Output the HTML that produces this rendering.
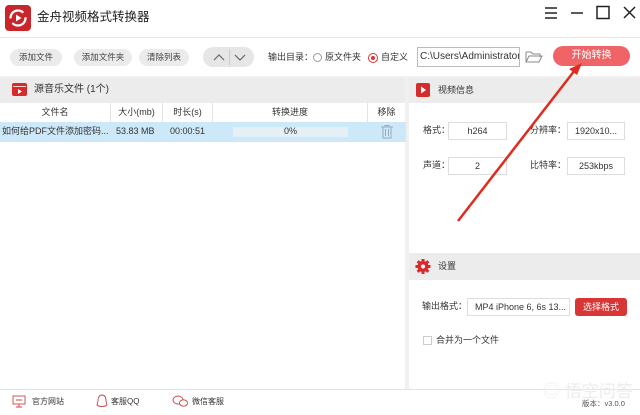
<!DOCTYPE html>
<html><head><meta charset="utf-8"><style>
*{margin:0;padding:0;box-sizing:border-box}
body{width:640px;height:415px;overflow:hidden;background:#fff;font-family:"Liberation Sans","Noto Sans CJK SC",sans-serif;font-size:9px;line-height:1.2;color:#333;position:relative}
.a{position:absolute}
.btn{position:absolute;height:17px;top:49px;background:#ebebeb;border-radius:9px;font-size:8.5px;line-height:17px;text-align:center;color:#444}
.hdr{background:#ececec}
.inp{position:absolute;background:#fff;border:1px solid #ddd;height:18px;line-height:16px;text-align:center;font-size:9px;color:#333}
.col{position:absolute;top:103px;height:19px;border-right:1px solid #e3e3e3;line-height:19px;text-align:center;font-size:9px}
</style></head><body>
<div class="a" style="left:5px;top:5px;width:26px;height:26px;background:#c9262b;border-radius:4px"></div>
<svg class="a" style="left:5px;top:5px" width="26" height="26" viewBox="0 0 26 26"><circle cx="13" cy="13" r="7.5" fill="none" stroke="#fff" stroke-width="2.2" stroke-dasharray="18 5"/><path d="M11 9.5 L16.5 13 L11 16.5Z" fill="#fff"/></svg>
<div class="a" style="left:37px;top:10px;font-size:12.5px;color:#222">金舟视频格式转换器</div>
<svg class="a" style="left:540px;top:5px" width="100" height="16" viewBox="0 0 100 16"><path d="M5 3h12M5 8h12M5 13h12" stroke="#222" stroke-width="1.5"/><path d="M31 8h12" stroke="#222" stroke-width="1.5"/><rect x="57" y="1.5" width="12" height="12" fill="none" stroke="#222" stroke-width="1.5"/><path d="M84 2l11 11M95 2l-11 11" stroke="#222" stroke-width="1.5"/></svg>
<div class="a" style="left:0;top:37px;width:640px;height:1px;background:#e6e6e6"></div>
<div class="btn" style="left:10px;width:52px">添加文件</div>
<div class="btn" style="left:74px;width:58px">添加文件夹</div>
<div class="btn" style="left:139px;width:50px">清除列表</div>
<div class="btn" style="left:203px;width:51px;height:20px;top:47px;border-radius:10px;background:#e6e6e6"></div>
<div class="a" style="left:229px;top:49px;width:1px;height:16px;background:#ccc"></div>
<svg class="a" style="left:203px;top:47px" width="51" height="20"><path d="M11 13l5-5 5 5M32 8l5 5 5-5" fill="none" stroke="#666" stroke-width="1.2"/></svg>
<div class="a" style="left:268px;top:52px;font-size:9px">输出目录：</div>
<div class="a" style="left:313px;top:53px;width:9px;height:9px;border:1px solid #999;border-radius:50%"></div>
<div class="a" style="left:325px;top:52px;font-size:9px">原文件夹</div>
<div class="a" style="left:368px;top:53px;width:10px;height:10px;border:1px solid #d33;border-radius:50%"></div>
<div class="a" style="left:371px;top:56px;width:4px;height:4px;background:#d33;border-radius:50%"></div>
<div class="a" style="left:381px;top:52px;font-size:9px">自定义</div>
<div class="a" style="left:417px;top:47px;width:103px;height:20px;border:1px solid #bbb;font-size:10px;line-height:18px;padding-left:2px;overflow:hidden;white-space:nowrap">C:\Users\Administrator\</div>
<svg class="a" style="left:525px;top:49px" width="18" height="15"><path d="M1 3h5l2 2h7v3M1 3v10h13l3-6H4l-3 6" fill="none" stroke="#888" stroke-width="1"/></svg>
<div class="a" style="left:553px;top:46px;width:77px;height:20px;background:#f06467;border-radius:10px;color:#fff;font-size:10px;line-height:20px;text-align:center">开始转换</div>
<div class="a" style="left:0;top:76px;width:640px;height:2px;background:#f0f0f0"></div>
<div class="a" style="left:405px;top:76px;width:4px;height:313px;background:#f0f0f0"></div>
<div class="a hdr" style="left:0;top:78px;width:405px;height:25px"></div>
<div class="a" style="left:12px;top:83px;width:15px;height:13px;background:#d62b2b;border-radius:2px"></div>
<svg class="a" style="left:12px;top:83px" width="15" height="13"><path d="M6 6l4 2.5-4 2.5z" fill="#fff"/><path d="M1 3.5h13" stroke="#fff" stroke-width=".8"/></svg>
<div class="a" style="left:34px;top:84px;font-size:10px">源音乐文件 (1个)</div>
<div class="col" style="left:0;width:111px">文件名</div>
<div class="col" style="left:111px;width:52px">大小(mb)</div>
<div class="col" style="left:163px;width:50px">时长(s)</div>
<div class="col" style="left:213px;width:155px">转换进度</div>
<div class="col" style="left:368px;width:37px;border:none">移除</div>
<div class="a" style="left:0;top:122px;width:406px;height:20px;background:#cde8f8"></div>
<div class="a" style="left:2px;top:126px;font-size:9px;white-space:nowrap">如何给PDF文件添加密码...</div>
<div class="a" style="left:116px;top:126px;font-size:9px">53.83 MB</div>
<div class="a" style="left:170px;top:126px;font-size:9px">00:00:51</div>
<div class="a" style="left:233px;top:127px;width:115px;height:10px;background:#e4eff6"></div>
<div class="a" style="left:284px;top:126px;font-size:9px">0%</div>
<svg class="a" style="left:380px;top:124px" width="14" height="15"><path d="M1 3h12M5 3V1.5h4V3M3 3v11h8V3M5.5 5v7M8.5 5v7" fill="none" stroke="#9ab" stroke-width="1"/></svg>
<div class="a hdr" style="left:409px;top:78px;width:231px;height:25px"></div>
<div class="a" style="left:416px;top:83px;width:14px;height:14px;background:#d62b2b;border-radius:2px"></div>
<svg class="a" style="left:416px;top:83px" width="14" height="14"><path d="M5 3.5l5 3.5-5 3.5z" fill="#fff"/></svg>
<div class="a" style="left:438px;top:85px;font-size:9px">视频信息</div>
<div class="a" style="left:423px;top:125px">格式：</div>
<div class="inp" style="left:448px;top:122px;width:59px">h264</div>
<div class="a" style="left:530px;top:125px">分辨率：</div>
<div class="inp" style="left:567px;top:122px;width:58px">1920x10...</div>
<div class="a" style="left:423px;top:160px">声道：</div>
<div class="inp" style="left:448px;top:157px;width:59px">2</div>
<div class="a" style="left:530px;top:160px">比特率：</div>
<div class="inp" style="left:567px;top:157px;width:58px">253kbps</div>
<div class="a hdr" style="left:409px;top:253px;width:231px;height:27px"></div>
<svg class="a" style="left:414px;top:258px" width="18" height="17" viewBox="0 0 18 17"><circle cx="9" cy="8.5" r="5.5" fill="#d62b2b"/><g stroke="#d62b2b" stroke-width="3"><path d="M9 1v15M1.5 8.5h15M3.7 3.2l10.6 10.6M14.3 3.2L3.7 13.8"/></g><circle cx="9" cy="8.5" r="2" fill="#fff"/></svg>
<div class="a" style="left:438px;top:261px;font-size:9px">设置</div>
<div class="a" style="left:422px;top:301px">输出格式：</div>
<div class="inp" style="left:467px;top:298px;width:103px;text-align:left;padding-left:7px">MP4 iPhone 6, 6s 13...</div>
<div class="a" style="left:575px;top:298px;width:52px;height:18px;background:#d83535;border-radius:3px;color:#fff;line-height:18px;text-align:center">选择格式</div>
<div class="a" style="left:423px;top:336px;width:9px;height:9px;border:1px solid #ccc"></div>
<div class="a" style="left:436px;top:335px">合并为一个文件</div>
<div class="a" style="left:0;top:389px;width:640px;height:1px;background:#e3e3e3"></div>
<svg class="a" style="left:12px;top:395px" width="14" height="13"><rect x="1" y="1" width="12" height="8" fill="none" stroke="#c44" stroke-width=".9"/><path d="M4 5h6M7 9v3M4 12h6" stroke="#c44" stroke-width=".9"/></svg>
<div class="a" style="left:32px;top:397px;font-size:8px">官方网站</div>
<svg class="a" style="left:96px;top:394px" width="12" height="15"><path d="M6 1c3 0 4 3 4 6l1 4c-2 2-8 2-10 0l1-4c0-3 1-6 4-6z" fill="none" stroke="#c44" stroke-width=".9"/></svg>
<div class="a" style="left:111px;top:397px;font-size:8px">客服QQ</div>
<svg class="a" style="left:172px;top:394px" width="17" height="14"><ellipse cx="6" cy="6" rx="5" ry="4" fill="none" stroke="#c44" stroke-width=".9"/><ellipse cx="11.5" cy="9" rx="4" ry="3.2" fill="#fff" stroke="#c44" stroke-width=".9"/></svg>
<div class="a" style="left:192px;top:397px;font-size:8px">微信客服</div>
<div class="a" style="left:543px;top:382px;font-size:17px;color:#ececec">◎ 悟空问答</div>
<div class="a" style="left:582px;top:399px;font-size:7.5px;color:#555">版本：v3.0.0</div>
<svg class="a" style="left:0;top:0" width="640" height="415"><path d="M458 221L575 70" stroke="#e02b20" stroke-width="2.5"/><path d="M582 63l-13 6 8 6z" fill="#e02b20"/></svg>
</body></html>
